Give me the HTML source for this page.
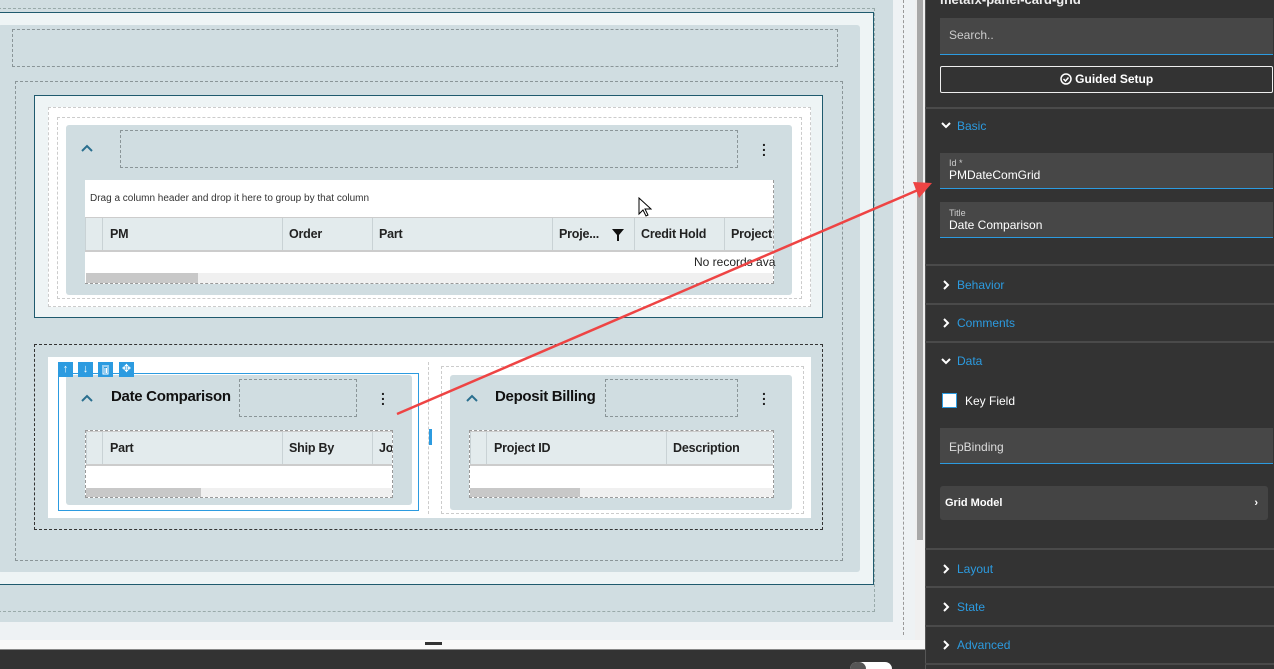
<!DOCTYPE html>
<html><head><meta charset="utf-8"><style>
*{box-sizing:border-box;margin:0;padding:0}
html,body{width:1274px;height:669px;overflow:hidden}
body{background:#eef2f4;font-family:"Liberation Sans",sans-serif;position:relative}
.a{position:absolute}
.dash{border:1px dashed #8a9598}
.card{background:#d0dde1;border-radius:3px}
.hdr{background:#e3ebed;border-top:1px solid #ccc;border-bottom:2px solid #ccc}
.col{position:absolute;top:0;height:100%;border-left:1px solid #c9d2d5;font-size:12.5px;font-weight:bold;color:#222;padding-left:6px;line-height:32px;letter-spacing:-0.2px}
.rp{color:#2c9be0;font-size:12px}
.sep{position:absolute;left:925px;width:349px;height:2px;background:#4a4a4a}
.fld{position:absolute;left:940px;width:333px;background:#474747;border-bottom:1px solid #2c9be0}
.chev{position:absolute;left:940px}
</style></head><body>
<div class="a" style="left:0;top:0;width:893px;height:622px;background:#d0dde1"></div>
<div class="a dash" style="left:-2px;top:8px;width:877px;height:604px;border-color:#9aa"></div>
<div class="a" style="left:-2px;top:12px;width:876px;height:573px;border:1px solid #1f5a6e;background:#eef4f5"></div>
<div class="a card" style="left:-2px;top:25px;width:862px;height:547px"></div>
<div class="a dash" style="left:12px;top:29px;width:826px;height:38px"></div>
<div class="a dash" style="left:15px;top:81px;width:828px;height:480px"></div>
<div class="a" style="left:34px;top:95px;width:789px;height:223px;border:1px solid #1f5a6e;background:#eef4f5"></div>
<div class="a" style="left:48px;top:107px;width:763px;height:200px;background:#fff;border:1px dashed #ccc"></div>
<div class="a" style="left:57px;top:117px;width:745px;height:182px;border:1px dashed #ccc"></div>
<div class="a card" style="left:66px;top:125px;width:726px;height:170px"></div>
<div class="a dash" style="left:120px;top:130px;width:618px;height:38px"></div>
<svg class="a" style="left:81px;top:144px" width="12" height="8"><path d="M1 7L6 2L11 7" fill="none" stroke="#2a6f8f" stroke-width="2"/></svg>
<div class="a" style="left:762px;top:139px;font-size:14px;font-weight:bold;line-height:5px;color:#222">.<br>.<br>.</div>
<div class="a" style="left:85px;top:180px;width:689px;height:104px;background:#fff;border:1px dashed #999;border-top:none;border-left:none"></div>
<div class="a" style="left:90px;top:193px;font-size:10px;color:#333">Drag a column header and drop it here to group by that column</div>
<div class="a hdr" style="left:85px;top:217px;width:688px;height:35px">
<div class="col" style="left:0;width:17px"></div>
<div class="col" style="left:17px;width:180px;padding-left:7px">PM</div>
<div class="col" style="left:197px;width:90px">Order</div>
<div class="col" style="left:287px;width:180px">Part</div>
<div class="col" style="left:467px;width:82px">Proje...<svg style="position:absolute;left:59px;top:11px" width="12" height="12"><path d="M0 0H12L7 6V12H5V6Z" fill="#111"/></svg></div>
<div class="col" style="left:549px;width:90px">Credit Hold</div>
<div class="col" style="left:639px;width:49px;overflow:hidden">Project</div>
</div>
<div class="a" style="left:694px;top:255px;font-size:12px;color:#222">No records ava</div>
<div class="a" style="left:86px;top:273px;width:687px;height:10px;background:#f0f0f0"></div>
<div class="a" style="left:86px;top:273px;width:112px;height:10px;background:#c8c8c8"></div>
<svg class="a" style="left:638px;top:197px" width="14" height="22"><path d="M1 1v16l4-4 3 6 2-1-3-6h6z" fill="#fff" stroke="#000"/></svg>
<div class="a" style="left:34px;top:344px;width:789px;height:186px;border:1px dashed #333"></div>
<div class="a" style="left:48px;top:357px;width:763px;height:161px;background:#fff"></div>
<div class="a" style="left:428px;top:362px;width:1px;height:152px;border-left:1px dashed #ccc"></div>
<div class="a" style="left:429px;top:429px;width:3px;height:16px;background:#2c9be0"></div>
<div class="a" style="left:58px;top:373px;width:361px;height:138px;border:1px solid #2c9be0"></div>
<div class="a card" style="left:66px;top:375px;width:346px;height:130px"></div>
<svg class="a" style="left:81px;top:394px" width="12" height="8"><path d="M1 7L6 2L11 7" fill="none" stroke="#2a6f8f" stroke-width="2"/></svg>
<div class="a" style="left:111px;top:388px;font-size:15px;font-weight:bold;color:#111;letter-spacing:-0.3px">Date Comparison</div>
<div class="a dash" style="left:239px;top:379px;width:118px;height:38px"></div>
<div class="a" style="left:381px;top:388px;font-size:14px;font-weight:bold;line-height:5px;color:#222">.<br>.<br>.</div>
<div class="a" style="left:85px;top:430px;width:308px;height:68px;background:#fff;border:1px dashed #999"></div>
<div class="a hdr" style="left:86px;top:431px;width:306px;height:35px">
<div class="col" style="left:0;width:16px"></div>
<div class="col" style="left:16px;width:180px;padding-left:7px">Part</div>
<div class="col" style="left:196px;width:90px">Ship By</div>
<div class="col" style="left:286px;width:20px;overflow:hidden">Jo</div>
</div>
<div class="a" style="left:86px;top:488px;width:306px;height:9px;background:#f0f0f0"></div>
<div class="a" style="left:86px;top:488px;width:115px;height:9px;background:#c8c8c8"></div>
<div class="a" style="left:58px;top:362px;width:15px;height:15px;background:#2c9be0;color:#fff;font-size:11px;text-align:center;line-height:15px">&#8593;</div>
<div class="a" style="left:78px;top:362px;width:15px;height:15px;background:#2c9be0;color:#fff;font-size:11px;text-align:center;line-height:15px">&#8595;</div>
<div class="a" style="left:98px;top:362px;width:15px;height:15px;background:#2c9be0"><svg width="15" height="15"><path d="M4 4h7M5 5v7h5V5M7 6v5M8.5 6v5" fill="none" stroke="#fff"/></svg></div>
<div class="a" style="left:119px;top:362px;width:15px;height:15px;background:#2c9be0;color:#fff;font-size:11px;text-align:center;line-height:15px">&#10021;</div>
<div class="a" style="left:441px;top:366px;width:363px;height:148px;border:1px dashed #ccc"></div>
<div class="a card" style="left:450px;top:375px;width:342px;height:135px"></div>
<svg class="a" style="left:466px;top:394px" width="12" height="8"><path d="M1 7L6 2L11 7" fill="none" stroke="#2a6f8f" stroke-width="2"/></svg>
<div class="a" style="left:495px;top:388px;font-size:15px;font-weight:bold;color:#111;letter-spacing:-0.3px">Deposit Billing</div>
<div class="a dash" style="left:605px;top:379px;width:133px;height:38px"></div>
<div class="a" style="left:762px;top:388px;font-size:14px;font-weight:bold;line-height:5px;color:#222">.<br>.<br>.</div>
<div class="a" style="left:469px;top:430px;width:305px;height:68px;background:#fff;border:1px dashed #999"></div>
<div class="a hdr" style="left:470px;top:431px;width:303px;height:35px">
<div class="col" style="left:0;width:16px"></div>
<div class="col" style="left:16px;width:180px;padding-left:7px">Project ID</div>
<div class="col" style="left:196px;width:107px">Description</div>
</div>
<div class="a" style="left:470px;top:488px;width:303px;height:9px;background:#f0f0f0"></div>
<div class="a" style="left:470px;top:488px;width:110px;height:9px;background:#c8c8c8"></div>
<div class="a" style="left:903px;top:0;height:635px;border-left:1px dashed #999"></div>
<div class="a" style="left:915px;top:0;width:10px;height:640px;background:#f0f0f0"></div>
<div class="a" style="left:917px;top:0;width:6px;height:540px;background:#a8a8a8"></div>
<div class="a" style="left:0;top:640px;width:925px;height:10px;background:#f8f8f8"></div>
<div class="a" style="left:425px;top:642px;width:17px;height:3px;background:#333"></div>
<div class="a" style="left:0;top:649px;width:925px;height:20px;background:#333;border-top:1px solid #888"></div>
<div class="a" style="left:850px;top:662px;width:42px;height:14px;border-radius:8px;background:#fff"></div>
<div class="a" style="left:850px;top:662px;width:16px;height:14px;border-radius:8px;background:#555"></div>
<div class="a" style="left:925px;top:0;width:349px;height:669px;background:#333;border-left:1px solid #555"></div>
<div class="a" style="left:940px;top:-8px;color:#eee;font-size:13px;font-weight:bold">metafx-panel-card-grid</div>
<div class="fld" style="top:18px;height:37px;padding:10px 9px;color:#ccc;font-size:12px">Search..</div>
<div class="a" style="left:940px;top:66px;width:333px;height:27px;border:1px solid #eee;border-radius:2px;color:#fff;font-size:12px;font-weight:bold;text-align:center;line-height:25px"><svg width="12" height="12" style="vertical-align:-2px"><circle cx="6" cy="6" r="5" fill="none" stroke="#fff" stroke-width="1.5"/><path d="M3.5 6l2 2 3-3.5" fill="none" stroke="#fff" stroke-width="1.5"/></svg> Guided Setup</div>
<div class="sep" style="top:107px"></div>
<svg class="chev" style="top:121px" width="12" height="8"><path d="M2 2L6 6L10 2" fill="none" stroke="#fff" stroke-width="2"/></svg><div class="a rp" style="left:957px;top:119px">Basic</div>
<div class="fld" style="top:153px;height:36px;padding:5px 9px;color:#fff;font-size:12px"><div style="font-size:9px;color:#ccc">Id *</div>PMDateComGrid</div>
<div class="fld" style="top:202px;height:36px;padding:6px 9px;color:#fff;font-size:12px"><div style="font-size:9px;color:#ccc">Title</div>Date Comparison</div>
<div class="sep" style="top:264px"></div>
<svg class="chev" style="top:279px" width="12" height="12"><path d="M4 2L8 6L4 10" fill="none" stroke="#fff" stroke-width="2"/></svg><div class="a rp" style="left:957px;top:278px">Behavior</div>
<div class="sep" style="top:303px"></div>
<svg class="chev" style="top:317px" width="12" height="12"><path d="M4 2L8 6L4 10" fill="none" stroke="#fff" stroke-width="2"/></svg><div class="a rp" style="left:957px;top:316px">Comments</div>
<div class="sep" style="top:341px"></div>
<svg class="chev" style="top:357px" width="12" height="8"><path d="M2 2L6 6L10 2" fill="none" stroke="#fff" stroke-width="2"/></svg><div class="a rp" style="left:957px;top:354px">Data</div>
<div class="a" style="left:942px;top:393px;width:15px;height:15px;background:#fff;border:1px solid #2c9be0"></div>
<div class="a" style="left:965px;top:394px;color:#fff;font-size:12px">Key Field</div>
<div class="fld" style="top:428px;height:36px;padding:12px 9px;color:#ddd;font-size:12px">EpBinding</div>
<div class="a" style="left:940px;top:486px;width:328px;height:34px;background:#444;border-radius:3px;color:#fff;font-size:11px;font-weight:bold;padding:11px 5px">Grid Model<span style="position:absolute;right:10px">&#8250;</span></div>
<div class="sep" style="top:548px"></div>
<svg class="chev" style="top:563px" width="12" height="12"><path d="M4 2L8 6L4 10" fill="none" stroke="#fff" stroke-width="2"/></svg><div class="a rp" style="left:957px;top:562px">Layout</div>
<div class="sep" style="top:586px"></div>
<svg class="chev" style="top:601px" width="12" height="12"><path d="M4 2L8 6L4 10" fill="none" stroke="#fff" stroke-width="2"/></svg><div class="a rp" style="left:957px;top:600px">State</div>
<div class="sep" style="top:625px"></div>
<svg class="chev" style="top:639px" width="12" height="12"><path d="M4 2L8 6L4 10" fill="none" stroke="#fff" stroke-width="2"/></svg><div class="a rp" style="left:957px;top:638px">Advanced</div>
<div class="sep" style="top:663px"></div>
<svg class="a" style="left:0;top:0" width="1274" height="669"><line x1="397" y1="414" x2="918" y2="190" stroke="#ee4444" stroke-width="2.5"/><path d="M932 183 L913 182 L919 198 Z" fill="#ee4444"/></svg>
</body></html>
